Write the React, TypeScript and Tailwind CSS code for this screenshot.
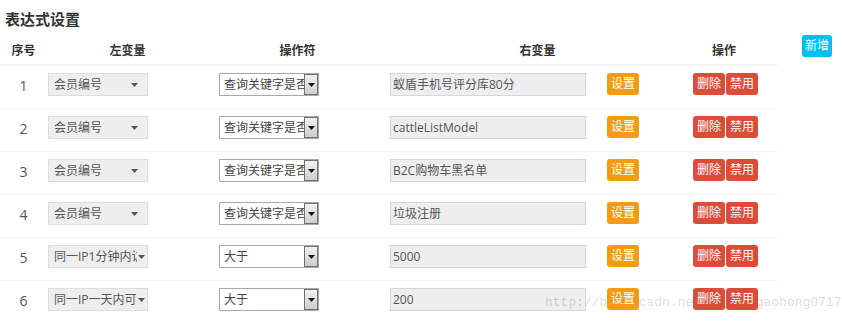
const rows = [
  { no: 1, left: "会员编号", op: "查询关键字是否", right: "蚁盾手机号评分库80分", long: false },
  { no: 2, left: "会员编号", op: "查询关键字是否", right: "cattleListModel", long: false },
  { no: 3, left: "会员编号", op: "查询关键字是否", right: "B2C购物车黑名单", long: false },
  { no: 4, left: "会员编号", op: "查询关键字是否", right: "垃圾注册", long: false },
  { no: 5, left: "同一IP1分钟内访问", op: "大于", right: "5000", long: true },
  { no: 6, left: "同一IP一天内可访问", op: "大于", right: "200", long: true },
];

const font = "font-['Open_Sans','Noto_Sans_CJK_SC',sans-serif]";

function LeftSelect({ text, long }: { text: string; long: boolean }) {
  return (
    <div
      className={`flex items-center w-[100px] h-[23px] bg-[#eeeeee] border border-[#dddddd] pl-[5px] ${long ? "pr-[2px]" : "pr-[9px]"}`}
    >
      <span className="flex-1 overflow-hidden whitespace-nowrap text-[12px] leading-[21px] text-[#555]">{text}</span>
      <svg width="7" height="4" viewBox="0 0 7 4" className="shrink-0 ml-[1px]">
        <path d="M0 0 H7 L3.5 4 Z" fill="#555" />
      </svg>
    </div>
  );
}

function OpSelect({ text }: { text: string }) {
  return (
    <div className="flex w-[100px] h-[23px] bg-white border border-[#a9a9a9]">
      <span className="flex-1 overflow-hidden whitespace-nowrap pl-[4px] text-[12px] leading-[21px] text-[#444]">{text}</span>
      <div className="w-[14px] h-[21px] flex items-center justify-center border border-[#707070] bg-gradient-to-b from-[#f2f2f2] to-[#cdcdcd]">
        <svg width="7" height="4" viewBox="0 0 7 4">
          <path d="M0 0 H7 L3.5 4 Z" fill="#111" />
        </svg>
      </div>
    </div>
  );
}

function Btn({ children, color }: { children: string; color: string }) {
  return (
    <span
      className={`relative z-10 flex items-center justify-center h-[22px] px-[4px] rounded-[3px] text-white text-[12px] leading-[22px] ${color}`}
    >
      {children}
    </span>
  );
}

export default function App() {
  return (
    <div className={`relative w-[842px] h-[322px] overflow-hidden bg-white ${font}`}>
      <div className="flex">
        <div className="w-[777px]">
          <h2 className="h-[40px] pt-[10px] pl-[5px] text-[15px] leading-[18px] font-bold text-[#333]">表达式设置</h2>
          <div className="grid grid-cols-[47px_161px_179px_301px_72px_17px] h-[26px] border-b-2 border-[#f4f4f4] text-[12px] leading-[20px] font-bold text-[#333] pt-[1px]">
            <div className="text-center">序号</div>
            <div className="text-center">左变量</div>
            <div className="text-center">操作符</div>
            <div className="text-center">右变量</div>
            <div className="text-center">操作</div>
            <div />
          </div>
          {rows.map((r) => (
            <div
              key={r.no}
              className="grid grid-cols-[47px_161px_179px_301px_89px] h-[43px] border-b border-[#f4f4f4] items-start"
            >
              <div className="text-center pt-[10px] text-[14px] leading-[20px] text-[#555]">{r.no}</div>
              <div className="pt-[7px] pl-[1px]">
                <LeftSelect text={r.left} long={r.long} />
              </div>
              <div className="pt-[7px] pl-[11px]">
                <OpSelect text={r.op} />
              </div>
              <div className="pt-[7px] pl-[3px] flex items-start">
                <div className="w-[196px] h-[23px] bg-[#eeeeee] border border-[#d2d6de] pl-[2px] text-[12px] leading-[21px] text-[#555] whitespace-nowrap overflow-hidden">
                  {r.right}
                </div>
                <div className="ml-[21px] flex">
                  <Btn color="bg-[#f39c12]">设置</Btn>
                </div>
              </div>
              <div className="pt-[7px] pl-[5px] flex gap-[1px]">
                <Btn color="bg-[#dd4b39]">删除</Btn>
                <Btn color="bg-[#dd4b39]">禁用</Btn>
              </div>
            </div>
          ))}
        </div>
        <div className="pt-[35px] pl-[25px] flex items-start">
          <span className="flex items-center justify-center h-[22px] px-[3px] rounded-[3px] bg-[#00c0ef] text-white text-[12px] leading-[22px]">
            新增
          </span>
        </div>
      </div>
      <div className="absolute left-[545px] top-[294px] z-[5] pointer-events-none whitespace-nowrap font-['Liberation_Mono',monospace] text-[13px] leading-[18px] text-[#000]/[0.17]">
        http://blog.csdn.net/wangyugaohong0717
      </div>
    </div>
  );
}
